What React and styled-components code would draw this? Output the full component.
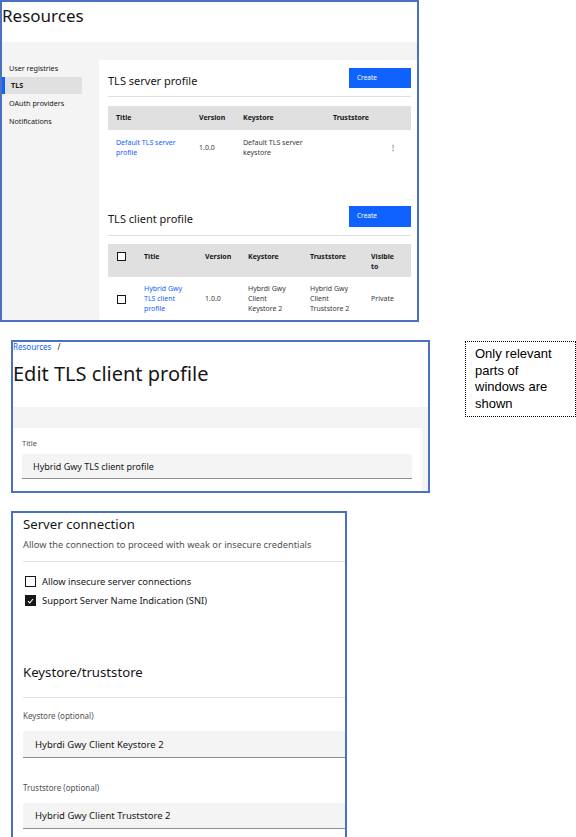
import React from "react";
import styled, { createGlobalStyle } from "styled-components";

const GlobalStyle = createGlobalStyle`
  html, body {
    margin: 0;
    padding: 0;
    background: #ffffff;
  }
  body {
    font-family: "Noto Sans", "Open Sans", sans-serif;
    color: #161616;
  }
  * {
    box-sizing: border-box;
  }
`;

const Blue = "#0f62fe";
const Frame = "#4a72c0";

const Canvas = styled.div`
  width: 576px;
  height: 837px;
  overflow: hidden;
`;

const Window = styled.div`
  width: ${(p) => p.w}px;
  height: ${(p) => p.h}px;
  margin-left: ${(p) => p.left || 0}px;
  margin-top: ${(p) => p.top || 0}px;
  border: 2px solid ${Frame};
  border-bottom: ${(p) => (p.open ? "none" : `2px solid ${Frame}`)};
  overflow: hidden;
  display: flex;
  flex-direction: column;
  background: #ffffff;
`;

/* ---------- window 1 ---------- */

const PageTitle = styled.div`
  height: 40px;
  padding-top: 3px;
  font-size: 17px;
  line-height: 22px;
  font-weight: 400;
  flex-shrink: 0;
`;

const Body = styled.div`
  flex: 1;
  display: flex;
  background: #f4f4f4;
  padding-top: 18px;
`;

const Nav = styled.div`
  width: 97px;
  flex-shrink: 0;
  margin-top: -1px;
`;

const NavItem = styled.div`
  width: 80px;
  height: 17.6px;
  display: flex;
  align-items: center;
  padding-left: ${(p) => (p.active ? 6 : 7)}px;
  font-size: 7.2px;
  color: #161616;
  font-weight: ${(p) => (p.active ? 700 : 400)};
  background: ${(p) => (p.active ? "#e0e0e0" : "transparent")};
  border-left: ${(p) => (p.active ? `3px solid ${Blue}` : "none")};
`;

const Panel = styled.div`
  flex: 1;
  background: #ffffff;
  padding: 0 6px 0 9px;
`;

const Section = styled.div`
  margin-top: ${(p) => p.gap || 0}px;
`;

const SectionHeader = styled.div`
  display: flex;
  justify-content: space-between;
  padding-top: 8px;
  padding-bottom: 8px;
  border-bottom: 1px solid #e0e0e0;
`;

const SectionTitle = styled.div`
  font-size: 11px;
  line-height: 14px;
  padding-top: ${(p) => p.offset}px;
`;

const CreateButton = styled.button`
  width: 62px;
  height: ${(p) => p.h}px;
  background: ${Blue};
  border: none;
  color: #ffffff;
  font-family: inherit;
  font-size: 6.5px;
  text-align: left;
  padding: 0 0 ${(p) => (p.h > 20 ? 3 : 2)}px 8px;
  cursor: pointer;
`;

const Table = styled.div`
  margin-top: ${(p) => p.gap}px;
  font-size: 7px;
`;

const HeadRow = styled.div`
  display: grid;
  grid-template-columns: ${(p) => p.cols};
  height: ${(p) => p.h}px;
  background: #e0e0e0;
  align-items: ${(p) => (p.top ? "start" : "center")};
  padding-top: ${(p) => (p.top ? 8 : 0)}px;
  font-weight: 700;
  line-height: 10px;
`;

const Row = styled.div`
  display: grid;
  grid-template-columns: ${(p) => p.cols};
  height: ${(p) => p.h}px;
  align-items: center;
  line-height: ${(p) => p.lh || 10}px;
  color: #393939;
`;

const Cell = styled.div`
  padding-left: ${(p) => (p.pad != null ? p.pad : 8)}px;
  padding-right: ${(p) => (p.tight ? 9 : 4)}px;
  text-align: ${(p) => (p.center ? "center" : "left")};
`;

const Link = styled.span`
  color: ${Blue};
`;

const Overflow = styled.span`
  color: #8d8d8d;
  font-size: 8px;
  font-weight: 700;
`;

const SmallBox = styled.div`
  width: 9px;
  height: 9px;
  border: 1px solid #161616;
  background: #ffffff;
`;

/* ---------- window 2 ---------- */

const Breadcrumb = styled.div`
  font-size: 8px;
  line-height: 10px;
  display: flex;
  gap: 6px;
`;

const Crumb = styled.span`
  color: ${Blue};
`;

const EditTitle = styled.div`
  margin-top: 10px;
  font-size: 20px;
  line-height: 24px;
  height: 45px;
  flex-shrink: 0;
`;

const FormArea = styled.div`
  flex: 1;
  background: #f4f4f4;
  padding: 21px 6px 0 0;
  display: flex;
`;

const FormPanel = styled.div`
  flex: 1;
  background: #ffffff;
  padding: 10px 10px 0 9px;
`;

const FieldLabel = styled.div`
  font-size: ${(p) => p.fs || 7.5}px;
  line-height: 11px;
  color: #525252;
  margin-bottom: ${(p) => p.mb || 5}px;
  margin-top: ${(p) => p.mt || 0}px;
`;

const Input = styled.div`
  height: ${(p) => p.h}px;
  background: #f4f4f4;
  border-bottom: 1px solid #8d8d8d;
  display: flex;
  align-items: center;
  padding-left: ${(p) => p.pad}px;
  font-size: ${(p) => p.fs}px;
  color: #161616;
`;

const Note = styled.div`
  width: 111px;
  height: 76px;
  margin-left: 35px;
  margin-top: 1px;
  border: 1px dotted #000000;
  padding: 4px 0 0 9px;
  font-family: "Liberation Sans", Arial, sans-serif;
  font-size: 13px;
  line-height: 16.5px;
  color: #000000;
`;

const WindowRow = styled.div`
  display: flex;
  align-items: flex-start;
  margin-top: 18px;
`;

/* ---------- window 3 ---------- */

const Settings = styled.div`
  padding-left: 10px;
`;

const GroupTitle = styled.div`
  font-size: 13.2px;
  line-height: 16px;
  margin-top: ${(p) => p.mt}px;
`;

const GroupText = styled.div`
  font-size: 9.3px;
  line-height: 11px;
  color: #525252;
  margin-top: 7px;
`;

const Divider = styled.div`
  height: 1px;
  background: #e0e0e0;
  margin-top: ${(p) => p.mt}px;
`;

const CheckRow = styled.label`
  display: flex;
  align-items: center;
  gap: 6px;
  height: 19px;
  padding-left: 2px;
  font-size: 9.4px;
  color: #161616;
`;

const Box = styled.span`
  width: 11px;
  height: 11px;
  border: 1px solid #161616;
  background: ${(p) => (p.checked ? "#161616" : "#ffffff")};
  display: flex;
  align-items: center;
  justify-content: center;
`;

const Checks = styled.div`
  margin-top: 10px;
`;

const Check = ({ checked, children }) => (
  <CheckRow>
    <Box checked={checked}>
      {checked && (
        <svg width="7" height="6" viewBox="0 0 7 6">
          <path d="M1 3.2 L2.8 5 L6 1" stroke="#fff" strokeWidth="1.1" fill="none" />
        </svg>
      )}
    </Box>
    {children}
  </CheckRow>
);

const serverCols = "83px 44px 90px 53px 33px";
const clientCols = "27px 62px 43px 62px 61px 48px";

export default function App() {
  return (
    <Canvas>
      <GlobalStyle />
      <Window w={419} h={322}>
        <PageTitle>Resources</PageTitle>
        <Body>
          <Nav>
            <NavItem>User registries</NavItem>
            <NavItem active>TLS</NavItem>
            <NavItem>OAuth providers</NavItem>
            <NavItem>Notifications</NavItem>
          </Nav>
          <Panel>
            <Section>
              <SectionHeader>
                <SectionTitle offset={6}>TLS server profile</SectionTitle>
                <CreateButton h={20}>Create</CreateButton>
              </SectionHeader>
              <Table gap={9}>
                <HeadRow cols={serverCols} h={24}>
                  <Cell>Title</Cell>
                  <Cell>Version</Cell>
                  <Cell>Keystore</Cell>
                  <Cell>Truststore</Cell>
                  <Cell />
                </HeadRow>
                <Row cols={serverCols} h={35}>
                  <Cell>
                    <Link>Default TLS server profile</Link>
                  </Cell>
                  <Cell>1.0.0</Cell>
                  <Cell>Default TLS server keystore</Cell>
                  <Cell />
                  <Cell pad={0} center>
                    <Overflow>⋮</Overflow>
                  </Cell>
                </Row>
              </Table>
            </Section>
            <Section gap={33}>
              <SectionHeader>
                <SectionTitle offset={6}>TLS client profile</SectionTitle>
                <CreateButton h={21}>Create</CreateButton>
              </SectionHeader>
              <Table gap={8}>
                <HeadRow cols={clientCols} h={33} top>
                  <Cell pad={9}>
                    <SmallBox />
                  </Cell>
                  <Cell pad={9}>Title</Cell>
                  <Cell>Version</Cell>
                  <Cell>Keystore</Cell>
                  <Cell>Truststore</Cell>
                  <Cell tight>
                    Visible
                    <br />
                    to
                  </Cell>
                </HeadRow>
                <Row cols={clientCols} h={44} lh={9.7}>
                  <Cell pad={9}>
                    <SmallBox />
                  </Cell>
                  <Cell pad={9} tight>
                    <Link>Hybrid Gwy TLS client profile</Link>
                  </Cell>
                  <Cell>1.0.0</Cell>
                  <Cell tight>Hybrdi Gwy Client Keystore 2</Cell>
                  <Cell tight>Hybrid Gwy Client Truststore 2</Cell>
                  <Cell>Private</Cell>
                </Row>
              </Table>
            </Section>
          </Panel>
        </Body>
      </Window>

      <WindowRow>
        <Window w={419} h={153} left={11}>
          <Breadcrumb>
            <Crumb>Resources</Crumb>
            <span>/</span>
          </Breadcrumb>
          <EditTitle>Edit TLS client profile</EditTitle>
          <FormArea>
            <FormPanel>
              <FieldLabel>Title</FieldLabel>
              <Input h={25} pad={11} fs={9}>
                Hybrid Gwy TLS client profile
              </Input>
            </FormPanel>
          </FormArea>
        </Window>
        <Note>
          Only relevant
          <br />
          parts of
          <br />
          windows are
          <br />
          shown
        </Note>
      </WindowRow>

      <Window w={336} h={330} left={11} top={18} open>
        <Settings>
          <GroupTitle mt={3}>Server connection</GroupTitle>
          <GroupText>Allow the connection to proceed with weak or insecure credentials</GroupText>
          <Divider mt={11} />
          <Checks>
            <Check>Allow insecure server connections</Check>
            <Check checked>Support Server Name Indication (SNI)</Check>
          </Checks>
          <GroupTitle mt={54}>Keystore/truststore</GroupTitle>
          <Divider mt={17} />
          <FieldLabel fs={8} mt={12} mb={10}>
            Keystore (optional)
          </FieldLabel>
          <Input h={27} pad={12} fs={9.5}>
            Hybrdi Gwy Client Keystore 2
          </Input>
          <FieldLabel fs={8} mt={24} mb={10}>
            Truststore (optional)
          </FieldLabel>
          <Input h={26} pad={12} fs={9.5}>
            Hybrid Gwy Client Truststore 2
          </Input>
        </Settings>
      </Window>
    </Canvas>
  );
}
